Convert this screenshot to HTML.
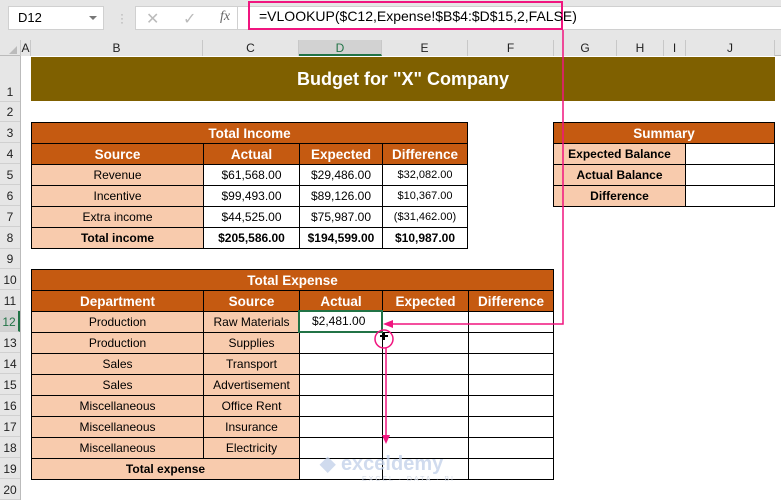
<!DOCTYPE html>
<html><head><meta charset="utf-8"><style>
*{margin:0;padding:0;box-sizing:border-box}
body{width:781px;height:500px;overflow:hidden;background:#fff;font-family:"Liberation Sans",Calibri,sans-serif;position:relative;font-size:12px;color:#000}
.a{position:absolute}
.ch{position:absolute;top:40px;height:16px;border-right:1px solid #c8c8c8;text-align:center;font-size:12px;line-height:16px;color:#222;background:#e6e6e6}
.rh{position:absolute;left:0;width:20px;border-bottom:1px solid #d0d0d0;text-align:center;font-size:12px;color:#222;background:#e6e6e6}
.c{position:absolute;border:1px solid #000;text-align:center;font-size:12px;display:flex;align-items:center;justify-content:center;white-space:nowrap}
.h{background:#c55a11;color:#fff;font-weight:bold;font-size:13.5px}
.l{background:#f8cbad}
.b{font-weight:bold}
</style></head><body>
<div class="a" style="left:0;top:0;width:781px;height:40px;background:#e6e6e6"></div>
<div class="a" style="left:8px;top:6px;width:96px;height:24px;background:#fff;border:1px solid #d0d0d0;font-size:13px;line-height:22px;padding-left:9px">D12</div>
<div class="a" style="left:89px;top:16px;width:0;height:0;border-left:4px solid transparent;border-right:4px solid transparent;border-top:4px solid #777"></div>
<div class="a" style="left:120px;top:12px;color:#aaa;font-size:12px;line-height:4px">·<br>·<br>·</div>
<div class="a" style="left:135px;top:6px;width:103px;height:24px;background:#fff;border:1px solid #d0d0d0"></div>
<div class="a" style="left:146px;top:9px;color:#bbb;font-size:16px">✕</div>
<div class="a" style="left:183px;top:9px;color:#bbb;font-size:16px">✓</div>
<div class="a" style="left:220px;top:9px;color:#666;font-style:italic;font-family:'Liberation Serif',serif;font-size:14px">fx</div>
<div class="a" style="left:238px;top:6px;width:543px;height:24px;background:#fff;border-top:1px solid #d0d0d0;border-bottom:1px solid #d0d0d0"></div>
<div class="a" style="left:248px;top:1px;width:315px;height:29px;border:2px solid #f0157f"></div>
<div class="a" style="left:259px;top:8px;font-size:14px">=VLOOKUP($C12,Expense!$B$4:$D$15,2,FALSE)</div>
<div class="a" style="left:0;top:40px;width:781px;height:16px;background:#e6e6e6;border-bottom:1px solid #bbb"></div>
<div class="a" style="left:0;top:40px;width:21px;height:16px;border-right:1px solid #c8c8c8"></div>
<div class="a" style="left:9px;top:46px;width:0;height:0;border-left:8px solid transparent;border-bottom:8px solid #bbb"></div>
<div class="ch" style="left:21px;width:10px">A</div>
<div class="ch" style="left:31px;width:172px">B</div>
<div class="ch" style="left:203px;width:96px">C</div>
<div class="ch" style="left:299px;width:83px;background:#d2d2d2;border-bottom:2px solid #217346;color:#217346">D</div>
<div class="ch" style="left:382px;width:86px">E</div>
<div class="ch" style="left:468px;width:86px">F</div>
<div class="ch" style="left:554px;width:63px">G</div>
<div class="ch" style="left:617px;width:47px">H</div>
<div class="ch" style="left:664px;width:22px">I</div>
<div class="ch" style="left:686px;width:89px">J</div>
<div class="a" style="left:0;top:56px;width:21px;height:444px;background:#e6e6e6;border-right:1px solid #bbb"></div>
<div class="rh" style="top:56px;height:46px;line-height:72px">1</div>
<div class="rh" style="top:102px;height:20px;line-height:20px">2</div>
<div class="rh" style="top:122px;height:21px;line-height:22px">3</div>
<div class="rh" style="top:143px;height:21px;line-height:22px">4</div>
<div class="rh" style="top:164px;height:21px;line-height:22px">5</div>
<div class="rh" style="top:185px;height:21px;line-height:22px">6</div>
<div class="rh" style="top:206px;height:21px;line-height:22px">7</div>
<div class="rh" style="top:227px;height:22px;line-height:22px">8</div>
<div class="rh" style="top:249px;height:20px;line-height:20px">9</div>
<div class="rh" style="top:269px;height:21px;line-height:22px">10</div>
<div class="rh" style="top:290px;height:21px;line-height:22px">11</div>
<div class="rh" style="top:311px;height:21px;line-height:22px;background:#d2d2d2;color:#217346;border-right:2px solid #217346">12</div>
<div class="rh" style="top:332px;height:21px;line-height:22px">13</div>
<div class="rh" style="top:353px;height:21px;line-height:22px">14</div>
<div class="rh" style="top:374px;height:21px;line-height:22px">15</div>
<div class="rh" style="top:395px;height:21px;line-height:22px">16</div>
<div class="rh" style="top:416px;height:21px;line-height:22px">17</div>
<div class="rh" style="top:437px;height:21px;line-height:22px">18</div>
<div class="rh" style="top:458px;height:21px;line-height:22px">19</div>
<div class="rh" style="top:479px;height:21px;line-height:22px">20</div>

<div class="a" style="left:31px;top:57px;width:744px;height:44px;background:#7f6000;color:#fff;font-weight:bold;font-size:18px;text-align:center;line-height:44px">Budget for "X" Company</div>

<!-- income -->
<div class="c h" style="left:31px;top:122px;width:437px;height:22px">Total Income</div>
<div class="c h" style="left:31px;top:143px;width:173px;height:22px">Source</div>
<div class="c h" style="left:203px;top:143px;width:97px;height:22px">Actual</div>
<div class="c h" style="left:299px;top:143px;width:84px;height:22px">Expected</div>
<div class="c h" style="left:382px;top:143px;width:86px;height:22px">Difference</div>
<div class="c l" style="left:31px;top:164px;width:173px;height:22px">Revenue</div>
<div class="c" style="left:203px;top:164px;width:97px;height:22px">$61,568.00</div>
<div class="c" style="left:299px;top:164px;width:84px;height:22px">$29,486.00</div>
<div class="c" style="left:382px;top:164px;width:86px;height:22px;font-size:11px">$32,082.00</div>
<div class="c l" style="left:31px;top:185px;width:173px;height:22px">Incentive</div>
<div class="c" style="left:203px;top:185px;width:97px;height:22px">$99,493.00</div>
<div class="c" style="left:299px;top:185px;width:84px;height:22px">$89,126.00</div>
<div class="c" style="left:382px;top:185px;width:86px;height:22px;font-size:11px">$10,367.00</div>
<div class="c l" style="left:31px;top:206px;width:173px;height:22px">Extra income</div>
<div class="c" style="left:203px;top:206px;width:97px;height:22px">$44,525.00</div>
<div class="c" style="left:299px;top:206px;width:84px;height:22px">$75,987.00</div>
<div class="c" style="left:382px;top:206px;width:86px;height:22px;font-size:11px">($31,462.00)</div>
<div class="c l b" style="left:31px;top:227px;width:173px;height:22px">Total income</div>
<div class="c b" style="left:203px;top:227px;width:97px;height:22px">$205,586.00</div>
<div class="c b" style="left:299px;top:227px;width:84px;height:22px">$194,599.00</div>
<div class="c b" style="left:382px;top:227px;width:86px;height:22px">$10,987.00</div>

<!-- summary -->
<div class="c h" style="left:553px;top:122px;width:222px;height:22px">Summary</div>
<div class="c l b" style="left:553px;top:143px;width:133px;height:22px">Expected Balance</div>
<div class="c" style="left:685px;top:143px;width:90px;height:22px"></div>
<div class="c l b" style="left:553px;top:164px;width:133px;height:22px">Actual Balance</div>
<div class="c" style="left:685px;top:164px;width:90px;height:22px"></div>
<div class="c l b" style="left:553px;top:185px;width:133px;height:22px">Difference</div>
<div class="c" style="left:685px;top:185px;width:90px;height:22px"></div>

<!-- expense -->
<div class="c h" style="left:31px;top:269px;width:523px;height:22px">Total Expense</div>
<div class="c h" style="left:31px;top:290px;width:173px;height:22px">Department</div>
<div class="c h" style="left:203px;top:290px;width:97px;height:22px">Source</div>
<div class="c h" style="left:299px;top:290px;width:84px;height:22px">Actual</div>
<div class="c h" style="left:382px;top:290px;width:87px;height:22px">Expected</div>
<div class="c h" style="left:468px;top:290px;width:86px;height:22px">Difference</div>

<div class="c l" style="left:31px;top:311px;width:173px;height:22px">Production</div><div class="c l" style="left:203px;top:311px;width:97px;height:22px">Raw Materials</div><div class="c" style="left:299px;top:311px;width:84px;height:22px"></div><div class="c" style="left:382px;top:311px;width:87px;height:22px"></div><div class="c" style="left:468px;top:311px;width:86px;height:22px"></div>
<div class="c l" style="left:31px;top:332px;width:173px;height:22px">Production</div><div class="c l" style="left:203px;top:332px;width:97px;height:22px">Supplies</div><div class="c" style="left:299px;top:332px;width:84px;height:22px"></div><div class="c" style="left:382px;top:332px;width:87px;height:22px"></div><div class="c" style="left:468px;top:332px;width:86px;height:22px"></div>
<div class="c l" style="left:31px;top:353px;width:173px;height:22px">Sales</div><div class="c l" style="left:203px;top:353px;width:97px;height:22px">Transport</div><div class="c" style="left:299px;top:353px;width:84px;height:22px"></div><div class="c" style="left:382px;top:353px;width:87px;height:22px"></div><div class="c" style="left:468px;top:353px;width:86px;height:22px"></div>
<div class="c l" style="left:31px;top:374px;width:173px;height:22px">Sales</div><div class="c l" style="left:203px;top:374px;width:97px;height:22px">Advertisement</div><div class="c" style="left:299px;top:374px;width:84px;height:22px"></div><div class="c" style="left:382px;top:374px;width:87px;height:22px"></div><div class="c" style="left:468px;top:374px;width:86px;height:22px"></div>
<div class="c l" style="left:31px;top:395px;width:173px;height:22px">Miscellaneous</div><div class="c l" style="left:203px;top:395px;width:97px;height:22px">Office Rent</div><div class="c" style="left:299px;top:395px;width:84px;height:22px"></div><div class="c" style="left:382px;top:395px;width:87px;height:22px"></div><div class="c" style="left:468px;top:395px;width:86px;height:22px"></div>
<div class="c l" style="left:31px;top:416px;width:173px;height:22px">Miscellaneous</div><div class="c l" style="left:203px;top:416px;width:97px;height:22px">Insurance</div><div class="c" style="left:299px;top:416px;width:84px;height:22px"></div><div class="c" style="left:382px;top:416px;width:87px;height:22px"></div><div class="c" style="left:468px;top:416px;width:86px;height:22px"></div>
<div class="c l" style="left:31px;top:437px;width:173px;height:22px">Miscellaneous</div><div class="c l" style="left:203px;top:437px;width:97px;height:22px">Electricity</div><div class="c" style="left:299px;top:437px;width:84px;height:22px"></div><div class="c" style="left:382px;top:437px;width:87px;height:22px"></div><div class="c" style="left:468px;top:437px;width:86px;height:22px"></div>
<div class="c l b" style="left:31px;top:458px;width:269px;height:22px">Total expense</div><div class="c" style="left:299px;top:458px;width:84px;height:22px"></div><div class="c" style="left:382px;top:458px;width:87px;height:22px"></div><div class="c" style="left:468px;top:458px;width:86px;height:22px"></div>

<div class="a" style="left:298px;top:310px;width:85px;height:23px;border:2px solid #217346;font-size:12px;line-height:19px;padding-left:12px;background:#fff">$2,481.00</div>

<!-- watermark -->
<div class="a" style="left:320px;top:451px;color:#c5d3ea;font-weight:bold;font-size:20px;opacity:.8">◆ exceldemy</div>
<div class="a" style="left:362px;top:476px;color:#d5dbe6;font-size:7px;letter-spacing:2px">EXCEL · DATA · BI</div>

<svg class="a" style="left:0;top:0" width="781" height="500">
<polyline points="563,30 563,324 392,324" fill="none" stroke="#f0157f" stroke-width="1.5"/>
<polygon points="383,324 393,320 393,328" fill="#f0157f"/>
<circle cx="384" cy="339" r="9" fill="none" stroke="#f0157f" stroke-width="1.5"/>
<path d="M380,336h8M384,332v8" stroke="#000" stroke-width="2"/>
<line x1="386" y1="348" x2="386" y2="436" stroke="#f0157f" stroke-width="1.5"/>
<polygon points="386,444 382,435 390,435" fill="#f0157f"/>
</svg>
</body></html>
